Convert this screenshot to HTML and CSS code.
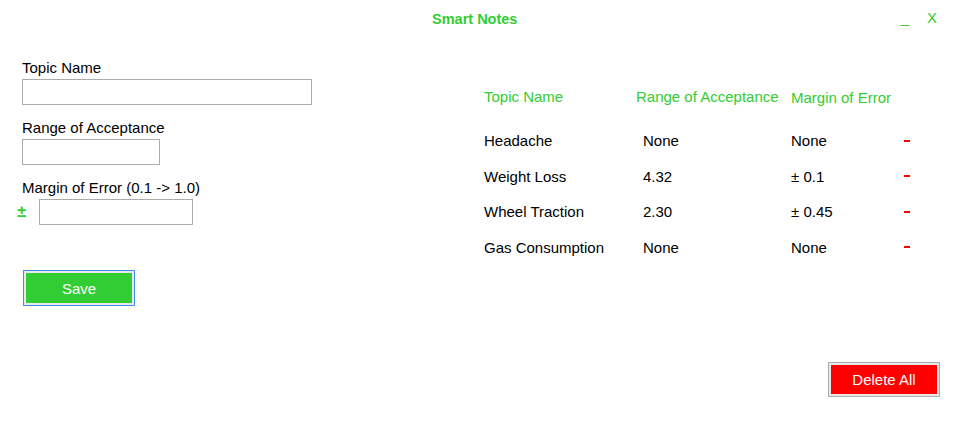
FILE: index.html
```html
<!DOCTYPE html>
<html>
<head>
<meta charset="utf-8">
<title>Smart Notes</title>
<link rel="stylesheet" href="styles.css">
</head>
<body>
<div class="app">
  <div class="titlebar">
    <div class="title">Smart Notes</div>
    <div class="controls">
      <span class="ctl min">_</span>
      <span class="ctl close">X</span>
    </div>
  </div>
  <div class="main">
    <div class="form">
      <div class="field">
        <label class="label">Topic Name</label>
        <input class="input input-wide" type="text">
      </div>
      <div class="field">
        <label class="label">Range of Acceptance</label>
        <input class="input input-short" type="text">
      </div>
      <div class="field">
        <label class="label">Margin of Error (0.1 -&gt; 1.0)</label>
        <div class="pm-row">
          <span class="pm">±</span>
          <input class="input input-mid" type="text">
        </div>
      </div>
      <button class="btn btn-save">Save</button>
    </div>
    <div class="list">
      <div class="grid">
        <div class="head">Topic Name</div>
        <div class="head">Range of Acceptance</div>
        <div class="head head-low">Margin of Error</div>
        <div class="head"></div>

        <div class="cell">Headache</div>
        <div class="cell val">None</div>
        <div class="cell">None</div>
        <div class="cell"><span class="minus"></span></div>

        <div class="cell">Weight Loss</div>
        <div class="cell val">4.32</div>
        <div class="cell">± 0.1</div>
        <div class="cell"><span class="minus"></span></div>

        <div class="cell">Wheel Traction</div>
        <div class="cell val">2.30</div>
        <div class="cell">± 0.45</div>
        <div class="cell"><span class="minus"></span></div>

        <div class="cell">Gas Consumption</div>
        <div class="cell val">None</div>
        <div class="cell">None</div>
        <div class="cell"><span class="minus"></span></div>
      </div>
      <button class="btn btn-delete">Delete All</button>
    </div>
  </div>
</div>
</body>
</html>
```
FILE: styles.css
```css
* { box-sizing: border-box; }
html, body { margin: 0; padding: 0; background: #ffffff; }
body {
  font-family: "Liberation Sans", Arial, sans-serif;
  font-size: 15px;
  line-height: 17px;
  color: #000000;
}
.app {
  width: 967px;
  height: 445px;
  display: flex;
  flex-direction: column;
}
.titlebar {
  height: 40px;
  display: flex;
  align-items: flex-start;
  padding-left: 432px;
  padding-right: 30px;
}
.title {
  margin-top: 11px;
  font-weight: bold;
  font-size: 14.5px;
  line-height: 17px;
  color: #32cd32;
}
.controls {
  margin-left: auto;
  display: flex;
  gap: 18px;
  margin-top: 9px;
}
.ctl {
  color: #32cd32;
  font-size: 15px;
  line-height: 17px;
}
.main {
  flex: 1;
  display: flex;
}
.form {
  width: 484px;
  padding-left: 22px;
  padding-top: 19px;
  display: flex;
  flex-direction: column;
  align-items: flex-start;
}
.field {
  display: flex;
  flex-direction: column;
  align-items: flex-start;
  margin-bottom: 14px;
}
.label {
  display: block;
  margin-bottom: 3px;
}
.input {
  height: 26px;
  border: 1px solid #ababab;
  background: #ffffff;
  margin: 0;
  padding: 0 4px;
  font: inherit;
  outline: none;
}
.input-wide { width: 290px; }
.input-short { width: 138px; }
.input-mid { width: 154px; }
.pm-row {
  display: flex;
  align-items: center;
  margin-left: -5px;
}
.pm {
  width: 22px;
  color: #32cd32;
  font-size: 17px;
  font-weight: bold;
  line-height: 26px;
}
.btn {
  font: inherit;
  color: #ffffff;
  cursor: pointer;
  padding: 0;
}
.btn-save {
  margin-top: 31px;
  margin-left: 1px;
  width: 112px;
  height: 36px;
  background: #32cd32;
  border: 1px solid #3d8ef0;
  box-shadow: inset 0 0 0 2px #e8e8e8;
}
.list {
  flex: 1;
  display: flex;
  flex-direction: column;
  padding-top: 48px;
  padding-bottom: 48px;
  padding-right: 27px;
}
.grid {
  display: grid;
  grid-template-columns: 152px 155px 113px 20px;
  row-gap: 18.5px;
}
.head {
  color: #32cd32;
  margin-bottom: 7.8px;
}
.head-low { padding-top: 1px; }
.val { padding-left: 7px; }
.cell { display: flex; align-items: center; }
.minus {
  display: block;
  width: 6px;
  height: 2px;
  background: #ff0000;
  margin-top: 0px;
}
.btn-delete {
  margin-top: auto;
  align-self: flex-end;
  width: 112px;
  height: 35px;
  background: #ff0000;
  border: 1px solid #adadad;
  box-shadow: inset 0 0 0 2px #e8e8e8;
}
```
